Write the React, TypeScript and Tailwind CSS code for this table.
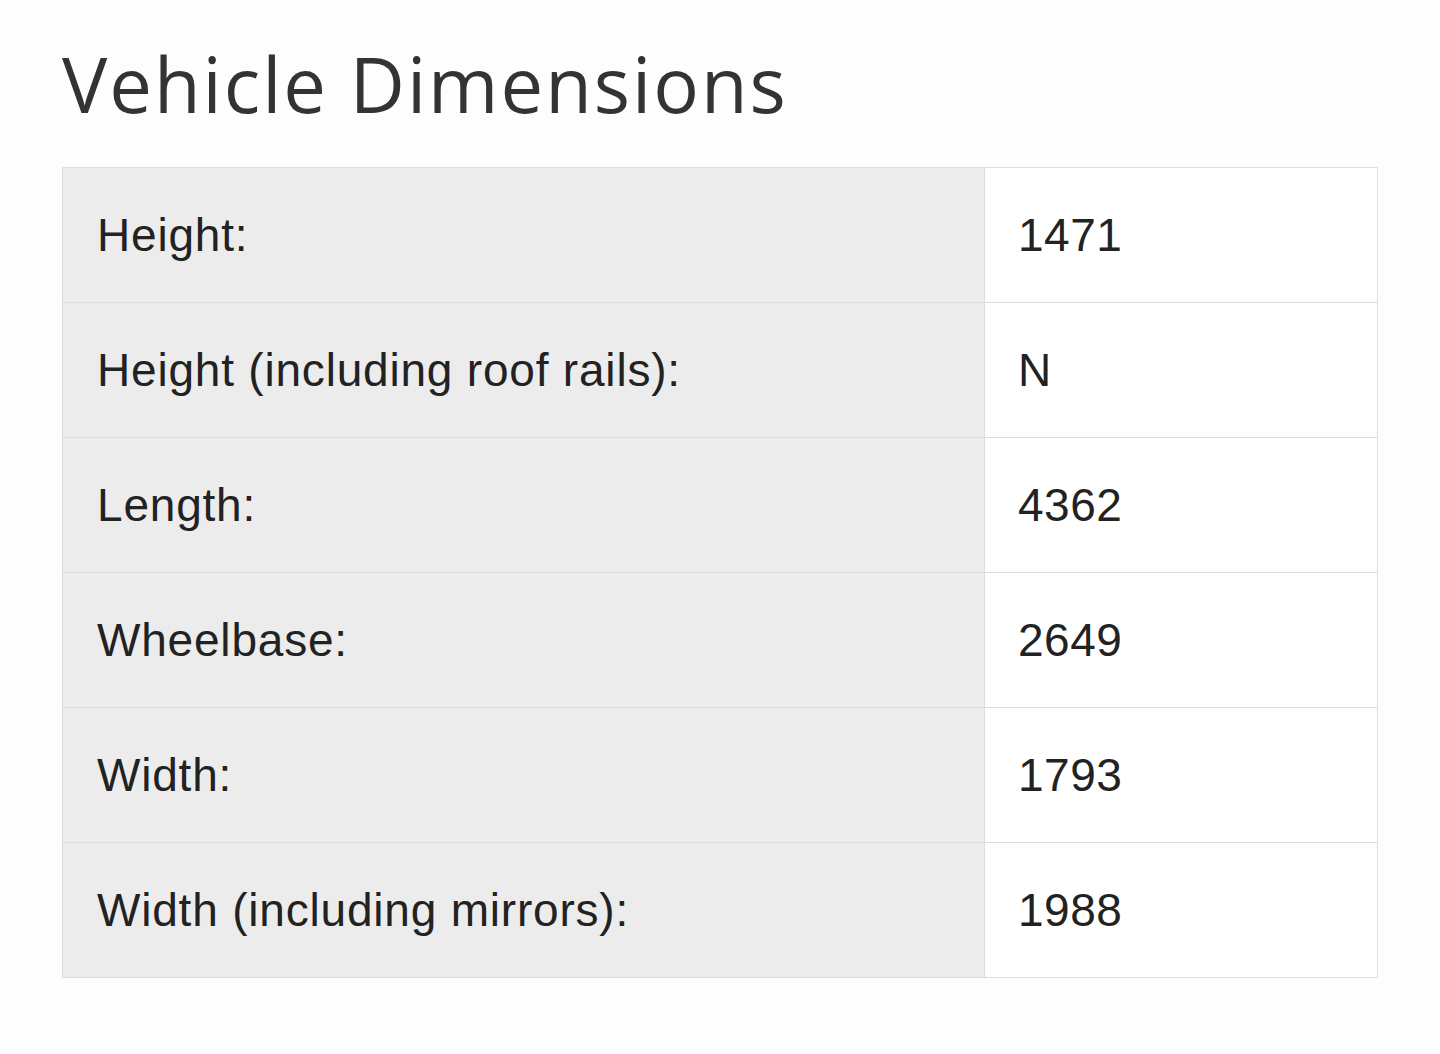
const rows: [string, string][] = [
  ["Height:", "1471"],
  ["Height (including roof rails):", "N"],
  ["Length:", "4362"],
  ["Wheelbase:", "2649"],
  ["Width:", "1793"],
  ["Width (including mirrors):", "1988"],
];

export default function App() {
  return (
    <div className="min-h-[1054px] bg-[#fdfdfd] px-[62px] pt-[38px]">
      <h1 className="font-['Open_Sans',sans-serif] text-[76px] leading-[92px] text-[#333] tracking-[2px]">
        Vehicle Dimensions
      </h1>
      <table className="mt-[37px] w-[1316px] border-collapse border border-[#ddd] font-['Liberation_Sans',Arial,sans-serif] text-[46px] text-[#222]">
        <tbody>
          {rows.map(([label, value]) => (
            <tr key={label} className="h-[135px] border-t border-[#ddd]">
              <td className="w-[922px] bg-[#ececec] pl-[34px] align-middle tracking-[0.8px]">{label}</td>
              <td className="border-l border-[#ddd] bg-white pl-[33px] align-middle tracking-[0.5px]">{value}</td>
            </tr>
          ))}
        </tbody>
      </table>
    </div>
  );
}
